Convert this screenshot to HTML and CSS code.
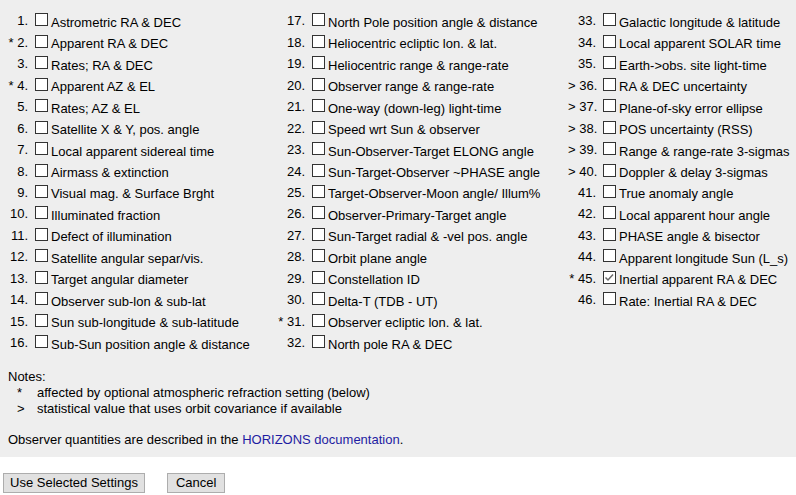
FILE: index.html
```html
<!DOCTYPE html>
<html>
<head>
<meta charset="utf-8">
<title>Observer Table Settings</title>
<link rel="stylesheet" href="styles.css">
</head>
<body>
<div class="panel">
  <div class="cols">
    <div class="col">
      <div class="row"><span class="num">1.</span><span class="box"></span><span class="lbl">Astrometric RA &amp; DEC</span></div>
      <div class="row"><span class="num">* 2.</span><span class="box"></span><span class="lbl">Apparent RA &amp; DEC</span></div>
      <div class="row"><span class="num">3.</span><span class="box"></span><span class="lbl">Rates; RA &amp; DEC</span></div>
      <div class="row"><span class="num">* 4.</span><span class="box"></span><span class="lbl">Apparent AZ &amp; EL</span></div>
      <div class="row"><span class="num">5.</span><span class="box"></span><span class="lbl">Rates; AZ &amp; EL</span></div>
      <div class="row"><span class="num">6.</span><span class="box"></span><span class="lbl">Satellite X &amp; Y, pos. angle</span></div>
      <div class="row"><span class="num">7.</span><span class="box"></span><span class="lbl">Local apparent sidereal time</span></div>
      <div class="row"><span class="num">8.</span><span class="box"></span><span class="lbl">Airmass &amp; extinction</span></div>
      <div class="row"><span class="num">9.</span><span class="box"></span><span class="lbl">Visual mag. &amp; Surface Brght</span></div>
      <div class="row"><span class="num">10.</span><span class="box"></span><span class="lbl">Illuminated fraction</span></div>
      <div class="row"><span class="num">11.</span><span class="box"></span><span class="lbl">Defect of illumination</span></div>
      <div class="row"><span class="num">12.</span><span class="box"></span><span class="lbl">Satellite angular separ/vis.</span></div>
      <div class="row"><span class="num">13.</span><span class="box"></span><span class="lbl">Target angular diameter</span></div>
      <div class="row"><span class="num">14.</span><span class="box"></span><span class="lbl">Observer sub-lon &amp; sub-lat</span></div>
      <div class="row"><span class="num">15.</span><span class="box"></span><span class="lbl">Sun sub-longitude &amp; sub-latitude</span></div>
      <div class="row"><span class="num">16.</span><span class="box"></span><span class="lbl">Sub-Sun position angle &amp; distance</span></div>
    </div>
    <div class="col">
      <div class="row"><span class="num">17.</span><span class="box"></span><span class="lbl">North Pole position angle &amp; distance</span></div>
      <div class="row"><span class="num">18.</span><span class="box"></span><span class="lbl">Heliocentric ecliptic lon. &amp; lat.</span></div>
      <div class="row"><span class="num">19.</span><span class="box"></span><span class="lbl">Heliocentric range &amp; range-rate</span></div>
      <div class="row"><span class="num">20.</span><span class="box"></span><span class="lbl">Observer range &amp; range-rate</span></div>
      <div class="row"><span class="num">21.</span><span class="box"></span><span class="lbl">One-way (down-leg) light-time</span></div>
      <div class="row"><span class="num">22.</span><span class="box"></span><span class="lbl">Speed wrt Sun &amp; observer</span></div>
      <div class="row"><span class="num">23.</span><span class="box"></span><span class="lbl">Sun-Observer-Target ELONG angle</span></div>
      <div class="row"><span class="num">24.</span><span class="box"></span><span class="lbl">Sun-Target-Observer ~PHASE angle</span></div>
      <div class="row"><span class="num">25.</span><span class="box"></span><span class="lbl">Target-Observer-Moon angle/ Illum%</span></div>
      <div class="row"><span class="num">26.</span><span class="box"></span><span class="lbl">Observer-Primary-Target angle</span></div>
      <div class="row"><span class="num">27.</span><span class="box"></span><span class="lbl">Sun-Target radial &amp; -vel pos. angle</span></div>
      <div class="row"><span class="num">28.</span><span class="box"></span><span class="lbl">Orbit plane angle</span></div>
      <div class="row"><span class="num">29.</span><span class="box"></span><span class="lbl">Constellation ID</span></div>
      <div class="row"><span class="num">30.</span><span class="box"></span><span class="lbl">Delta-T (TDB - UT)</span></div>
      <div class="row"><span class="num">* 31.</span><span class="box"></span><span class="lbl">Observer ecliptic lon. &amp; lat.</span></div>
      <div class="row"><span class="num">32.</span><span class="box"></span><span class="lbl">North pole RA &amp; DEC</span></div>
    </div>
    <div class="col">
      <div class="row"><span class="num">33.</span><span class="box"></span><span class="lbl">Galactic longitude &amp; latitude</span></div>
      <div class="row"><span class="num">34.</span><span class="box"></span><span class="lbl">Local apparent SOLAR time</span></div>
      <div class="row"><span class="num">35.</span><span class="box"></span><span class="lbl">Earth-&gt;obs. site light-time</span></div>
      <div class="row"><span class="num">&gt; 36.</span><span class="box"></span><span class="lbl">RA &amp; DEC uncertainty</span></div>
      <div class="row"><span class="num">&gt; 37.</span><span class="box"></span><span class="lbl">Plane-of-sky error ellipse</span></div>
      <div class="row"><span class="num">&gt; 38.</span><span class="box"></span><span class="lbl">POS uncertainty (RSS)</span></div>
      <div class="row"><span class="num">&gt; 39.</span><span class="box"></span><span class="lbl">Range &amp; range-rate 3-sigmas</span></div>
      <div class="row"><span class="num">&gt; 40.</span><span class="box"></span><span class="lbl">Doppler &amp; delay 3-sigmas</span></div>
      <div class="row"><span class="num">41.</span><span class="box"></span><span class="lbl">True anomaly angle</span></div>
      <div class="row"><span class="num">42.</span><span class="box"></span><span class="lbl">Local apparent hour angle</span></div>
      <div class="row"><span class="num">43.</span><span class="box"></span><span class="lbl">PHASE angle &amp; bisector</span></div>
      <div class="row"><span class="num">44.</span><span class="box"></span><span class="lbl">Apparent longitude Sun (L_s)</span></div>
      <div class="row"><span class="num">* 45.</span><span class="box"><svg width="11" height="11" viewBox="0 0 11 11"><polyline points="1.5,5.5 4,8 9,2.5" fill="none" stroke="#6a6a6a" stroke-width="1.5"/></svg></span><span class="lbl">Inertial apparent RA &amp; DEC</span></div>
      <div class="row"><span class="num">46.</span><span class="box"></span><span class="lbl">Rate: Inertial RA &amp; DEC</span></div>
    </div>
  </div>
  <div class="notes">
    <div class="notes-title">Notes:</div>
    <div class="note"><span class="mark">*</span><span>affected by optional atmospheric refraction setting (below)</span></div>
    <div class="note"><span class="mark">&gt;</span><span>statistical value that uses orbit covariance if available</span></div>
  </div>
  <p class="docs">Observer quantities are described in the <a class="link" href="#">HORIZONS documentation</a>.</p>
</div>
<div class="actions">
  <button class="btn btn-use" type="button">Use Selected Settings</button>
  <button class="btn btn-cancel" type="button">Cancel</button>
</div>
</body>
</html>
```
FILE: styles.css
```css
html, body {
  margin: 0;
  padding: 0;
  background: #ffffff;
}
body {
  font-family: "Liberation Sans", Arial, sans-serif;
  font-size: 13px;
  color: #000000;
  line-height: 15px;
}
.panel {
  background: #eeeeee;
  padding: 9px 0 9px 0;
}
.cols {
  display: grid;
  grid-template-columns: 277px 291px 1fr;
}
.col {
  display: grid;
  grid-auto-rows: 21.47px;
}
.row {
  display: grid;
  grid-template-columns: 28px 20px 1fr;
  align-items: center;
  white-space: nowrap;
}
.num {
  grid-column: 1;
  text-align: right;
  padding-top: 2px;
}
.box {
  grid-column: 2;
  margin-left: 7px;
  width: 13px;
  height: 13px;
  box-sizing: border-box;
  border: 1px solid #333333;
  background: #ffffff;
  display: flex;
  align-items: center;
  justify-content: center;
}
.lbl {
  grid-column: 3;
  padding-left: 3px;
  padding-top: 5px;
}
.notes {
  margin-top: 16px;
  padding-left: 8px;
  line-height: 16px;
}
.note {
  display: flex;
}
.mark {
  width: 20px;
  margin-left: 9px;
  flex: none;
}
.docs {
  margin: 15px 0 0 0;
  padding-left: 8px;
  line-height: 16px;
}
.link {
  color: #1e1ca2;
  text-decoration: none;
}
.actions {
  display: flex;
  gap: 22px;
  padding: 16px 0 0 3px;
}
.btn {
  font-family: "Liberation Sans", Arial, sans-serif;
  font-size: 13px;
  color: #000000;
  background: #e1e1e1;
  border: 1px solid #adadad;
  border-radius: 0;
  height: 20px;
  margin: 0;
  line-height: 18px;
}
.btn-use {
  padding: 0 6px;
}
.btn-cancel {
  padding: 0 8px;
  min-width: 58px;
}
```
